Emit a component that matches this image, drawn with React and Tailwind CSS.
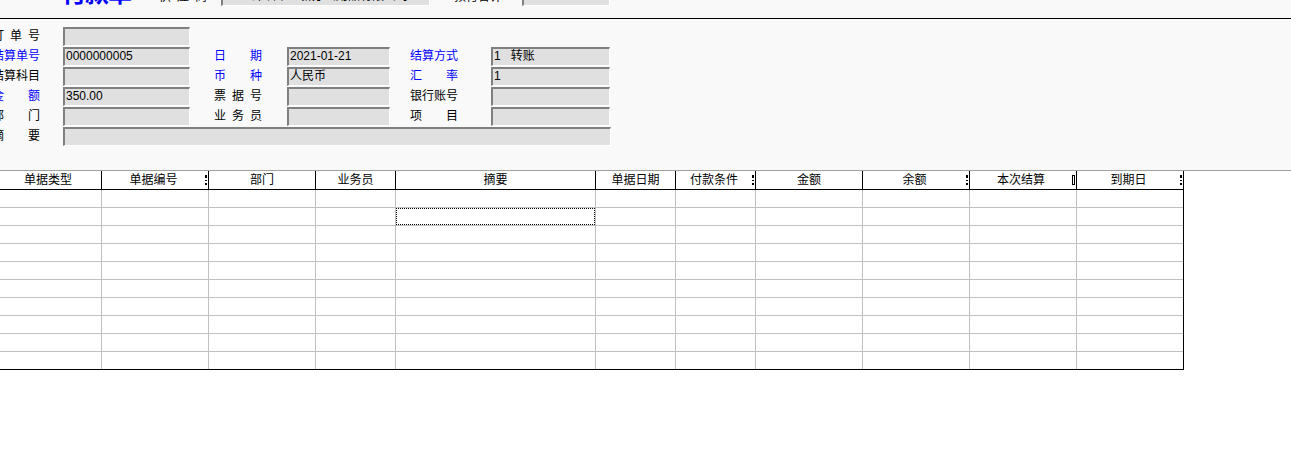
const cols = [
  { w: 'w-[107px]', title: '单据类型' },
  { w: 'w-[107px]', title: '单据编号', mark: true },
  { w: 'w-[107px]', title: '部门' },
  { w: 'w-[80px]', title: '业务员' },
  { w: 'w-[200px]', title: '摘要' },
  { w: 'w-[80px]', title: '单据日期' },
  { w: 'w-[80px]', title: '付款条件', mark: true },
  { w: 'w-[107px]', title: '金额' },
  { w: 'w-[107px]', title: '余额', mark: true },
  { w: 'w-[107px]', title: '本次结算', box: true },
  { w: 'w-[106px]', title: '到期日', mark: true, last: true },
]

const rows = Array.from({ length: 10 }, (_, i) => i)

function Label({ text, blue, className = '' }) {
  return (
    <div
      className={`w-[48px] shrink-0 text-[12px] leading-[14px] [text-align-last:justify] whitespace-nowrap ${
        blue ? 'text-[#0000ff]' : 'text-black'
      } ${className}`}
    >
      {text}
    </div>
  )
}

function Field({ value = '', className = '' }) {
  return (
    <div
      className={`h-[19px] shrink-0 flex items-center bg-[#e0e0e0] border-t-2 border-l-2 border-t-[#808080] border-l-[#808080] border-r border-b border-r-white border-b-white pl-[1px] pb-[2px] text-[12px] leading-none text-black whitespace-nowrap overflow-hidden ${className}`}
    >
      {value}
    </div>
  )
}

export default function App() {
  return (
    <div className="w-[1291px] h-[468px] overflow-hidden bg-white font-['Liberation_Sans','Noto_Sans_CJK_SC',sans-serif]">
      {/* header panel */}
      <div className="h-[171px] bg-[#f9f9f9] border-b border-[#a0a0a0] overflow-hidden">
        <div className="flex items-end h-[28px] -mt-[22px]">
          <div className="ml-[62px] text-[24px] leading-[28px] font-bold text-[#0000ff] tracking-[-1px] translate-y-[2px]">
            付款单
          </div>
          <Label text="供 应 商" className="ml-[28px] mb-[2px]" />
          <Field value="01 -- 深圳市亚新办公用品有限公司" className="ml-[14px] w-[209px]" />
          <div className="ml-[24px] mb-[2px] text-[12px] leading-[14px] text-black">预付合计</div>
          <Field className="ml-[20px] w-[88px]" />
        </div>
        <div className="mt-[12px] border-t border-black" />

        <div className="pt-[7px] flex flex-col">
          <div className="flex items-center h-[20px]">
            <Label text="订 单 号" className="-ml-[8px]" />
            <Field className="ml-[23px] w-[127px]" />
          </div>
          <div className="flex items-center h-[20px]">
            <Label text="结算单号" blue className="-ml-[8px]" />
            <Field value="0000000005" className="ml-[23px] w-[127px]" />
            <Label text="日 期" blue className="ml-[24px]" />
            <Field value="2021-01-21" className="ml-[25px] w-[103px]" />
            <Label text="结算方式" blue className="ml-[20px]" />
            <Field value={'1\u00a0\u00a0\u00a0转账'} className="ml-[33px] w-[119px]" />
          </div>
          <div className="flex items-center h-[20px]">
            <Label text="结算科目" className="-ml-[8px]" />
            <Field className="ml-[23px] w-[127px]" />
            <Label text="币 种" blue className="ml-[24px]" />
            <Field value="人民币" className="ml-[25px] w-[103px]" />
            <Label text="汇 率" blue className="ml-[20px]" />
            <Field value="1" className="ml-[33px] w-[119px]" />
          </div>
          <div className="flex items-center h-[20px]">
            <Label text="金 额" blue className="-ml-[8px]" />
            <Field value="350.00" className="ml-[23px] w-[127px]" />
            <Label text="票 据 号" className="ml-[24px]" />
            <Field className="ml-[25px] w-[103px]" />
            <Label text="银行账号" className="ml-[20px]" />
            <Field className="ml-[33px] w-[119px]" />
          </div>
          <div className="flex items-center h-[20px]">
            <Label text="部 门" className="-ml-[8px]" />
            <Field className="ml-[23px] w-[127px]" />
            <Label text="业 务 员" className="ml-[24px]" />
            <Field className="ml-[25px] w-[103px]" />
            <Label text="项 目" className="ml-[20px]" />
            <Field className="ml-[33px] w-[119px]" />
          </div>
          <div className="flex items-center h-[20px]">
            <Label text="摘 要" className="-ml-[8px]" />
            <Field className="ml-[23px] w-[548px]" />
          </div>
        </div>
      </div>

      {/* grid */}
      <div className="-ml-[5px] w-max border-r border-b border-black">
        <div className="flex h-[19px] border-b border-black">
          {cols.map((c) => (
            <div
              key={c.title}
              className={`${c.w} shrink-0 h-full flex items-center text-[12px] leading-none text-black ${
                c.last ? '' : 'border-r border-black'
              }`}
            >
              <div className="flex-1 text-center">{c.title}</div>
              {c.mark && (
                <div className="w-[2px] h-[10px] mr-[1px] border-y-2 border-black bg-[repeating-linear-gradient(to_bottom,#000_0,#000_1px,transparent_1px,transparent_3px)]" />
              )}
              {c.box && <div className="w-[3px] h-[10px] mr-[1px] border border-black" />}
            </div>
          ))}
        </div>
        {rows.map((r) => (
          <div
            key={r}
            className={`flex ${r === rows.length - 1 ? 'h-[17px]' : 'h-[18px] border-b border-[#c0c0c0]'}`}
          >
            {cols.map((c) => (
              <div
                key={c.title}
                className={`${c.w} shrink-0 h-full ${c.last ? '' : 'border-r border-[#c0c0c0]'}`}
              >
                {r === 1 && c.title === '摘要' && (
                  <div className="h-full w-full border border-dotted border-black" />
                )}
              </div>
            ))}
          </div>
        ))}
      </div>
    </div>
  )
}
